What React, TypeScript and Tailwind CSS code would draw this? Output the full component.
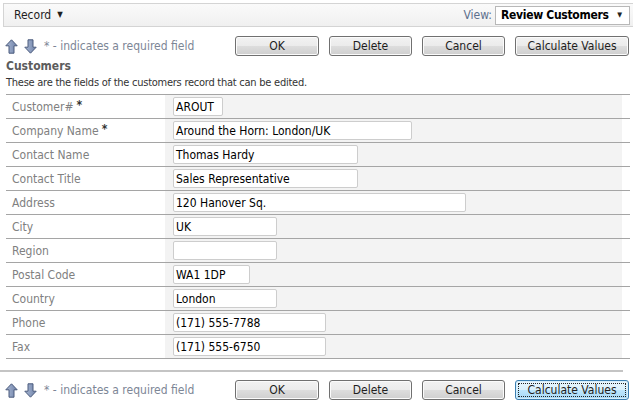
import React from "react";

const UpArrow = () => (
  <svg width="13" height="15" viewBox="0 0 13 15">
    <defs>
      <linearGradient id="ga" x1="0" y1="0" x2="1" y2="0">
        <stop offset="0" stopColor="#a9b8d4" />
        <stop offset="1" stopColor="#6f82a8" />
      </linearGradient>
    </defs>
    <path d="M6.5 0.8 L12.2 6.8 L9 6.8 L9 14.2 L4 14.2 L4 6.8 L0.8 6.8 Z" fill="url(#ga)" stroke="#4a5a7c" strokeWidth="1" strokeLinejoin="round" />
  </svg>
);

const DownArrow = () => (
  <svg width="13" height="15" viewBox="0 0 13 15">
    <defs>
      <linearGradient id="gb" x1="0" y1="0" x2="1" y2="0">
        <stop offset="0" stopColor="#a9b8d4" />
        <stop offset="1" stopColor="#6f82a8" />
      </linearGradient>
    </defs>
    <path d="M6.5 14.2 L12.2 8.2 L9 8.2 L9 0.8 L4 0.8 L4 8.2 L0.8 8.2 Z" fill="url(#gb)" stroke="#4a5a7c" strokeWidth="1" strokeLinejoin="round" />
  </svg>
);

const btn =
  "h-[20px] rounded-[3px] border border-[#707070] bg-[linear-gradient(#f2f2f2,#ebebeb_50%,#dddddd_50%,#cfcfcf)] shadow-[inset_0_0_0_1px_#fbfbfb] text-[12px] text-[#1e1e1e] flex items-center justify-center leading-none";

const Buttons = ({ focus }: { focus?: boolean }) => (
  <div className="flex items-center gap-[10px]">
    <button className={btn + " w-[84px]"}>OK</button>
    <button className={btn + " w-[83px]"}>Delete</button>
    <button className={btn + " w-[83px]"}>Cancel</button>
    {focus ? (
      <button className="h-[20px] w-[114px] rounded-[3px] border border-[#3c7fb1] bg-[linear-gradient(#eaf6fd,#d9f0fc_50%,#bee6fd_50%,#a7d9f5)] shadow-[inset_0_0_0_1px_#d6eefb] text-[12px] text-[#1e1e1e] flex items-center justify-center p-[2px] leading-none">
        <span className="w-full h-full border border-dotted border-[#222] flex items-center justify-center">Calculate Values</span>
      </button>
    ) : (
      <button className={btn + " w-[114px]"}>Calculate Values</button>
    )}
  </div>
);

const ActionRow = ({ focus }: { focus?: boolean }) => (
  <div className="flex items-center h-[20px]">
    <div className="w-[235px] flex items-center pl-[5px]">
      <UpArrow />
      <span className="w-[6px]" />
      <DownArrow />
      <span className="ml-[7px] text-[12px] text-[#7d8696]">* - indicates a required field</span>
    </div>
    <Buttons focus={focus} />
  </div>
);

const rows: { label: string; req?: boolean; value: string; w: string }[] = [
  { label: "Customer#", req: true, value: "AROUT", w: "w-[50px]" },
  { label: "Company Name", req: true, value: "Around the Horn: London/UK", w: "w-[239px]" },
  { label: "Contact Name", value: "Thomas Hardy", w: "w-[185px]" },
  { label: "Contact Title", value: "Sales Representative", w: "w-[185px]" },
  { label: "Address", value: "120 Hanover Sq.", w: "w-[293px]" },
  { label: "City", value: "UK", w: "w-[104px]" },
  { label: "Region", value: "", w: "w-[104px]" },
  { label: "Postal Code", value: "WA1 1DP", w: "w-[77px]" },
  { label: "Country", value: "London", w: "w-[104px]" },
  { label: "Phone", value: "(171) 555-7788", w: "w-[153px]" },
  { label: "Fax", value: "(171) 555-6750", w: "w-[153px]" },
];

export default function App() {
  return (
    <div className="w-[633px] h-[405px] overflow-hidden bg-white font-['DejaVu_Sans_Condensed','DejaVu_Sans',sans-serif] text-[12px]">
      <div className="ml-[3px] mt-[3px] w-[632px] h-[24px] border border-[#d4d4d4] bg-[linear-gradient(#fafafa,#f0f0f0)] flex items-center justify-between pl-[10px]">
        <div className="flex items-center text-[#1e1e1e]">
          <span>Record</span>
          <span className="ml-[6px] text-[8px]">▼</span>
        </div>
        <div className="flex items-center mr-[4px]">
          <span className="text-[#5d6f8d] mr-[3px]">View:</span>
          <div className="w-[135px] h-[19px] border border-[#b8b8b8] bg-white flex items-center justify-between pl-[5px] pr-[7px] whitespace-nowrap">
            <span className="font-bold text-black tracking-[-0.3px]">Review Customers</span>
            <span className="text-[7px] text-[#222]">▼</span>
          </div>
        </div>
      </div>

      <div className="mt-[9px]">
        <ActionRow />
      </div>

      <div className="ml-[6px] mt-[3px] font-bold text-[#5c5c5c] leading-[15px]">Customers</div>
      <div className="ml-[6px] mt-[2px] text-[11px] text-[#333] leading-[14px] tracking-[-0.25px]">
        These are the fields of the customers record that can be edited.
      </div>

      <div className="ml-[6px] mt-[4px] w-[624px] border-t border-[#a5a5a5]">
        {rows.map((r) => (
          <div key={r.label} className="flex h-[24px] border-b border-[#a5a5a5]">
            <div className="w-[159px] pl-[6px] flex items-center text-[#808080]">
              <span>{r.label}</span>
              {r.req && <span className="ml-[3px] font-bold text-[#333] relative top-[-2px]">*</span>}
            </div>
            <div className="flex-1 mr-[8px] bg-[#f3f3f3] flex items-center pl-[8px]">
              <div className={r.w + " h-[19px] border border-[#cdcdcd] rounded-[2px] bg-white flex items-center pl-[2px] text-black whitespace-nowrap overflow-hidden"}>
                {r.value}
              </div>
            </div>
          </div>
        ))}
      </div>

      <div className="mt-[11px] w-[623px] h-[2px] bg-[#c4c4c4]" />

      <div className="mt-[8px]">
        <ActionRow focus />
      </div>
    </div>
  );
}
